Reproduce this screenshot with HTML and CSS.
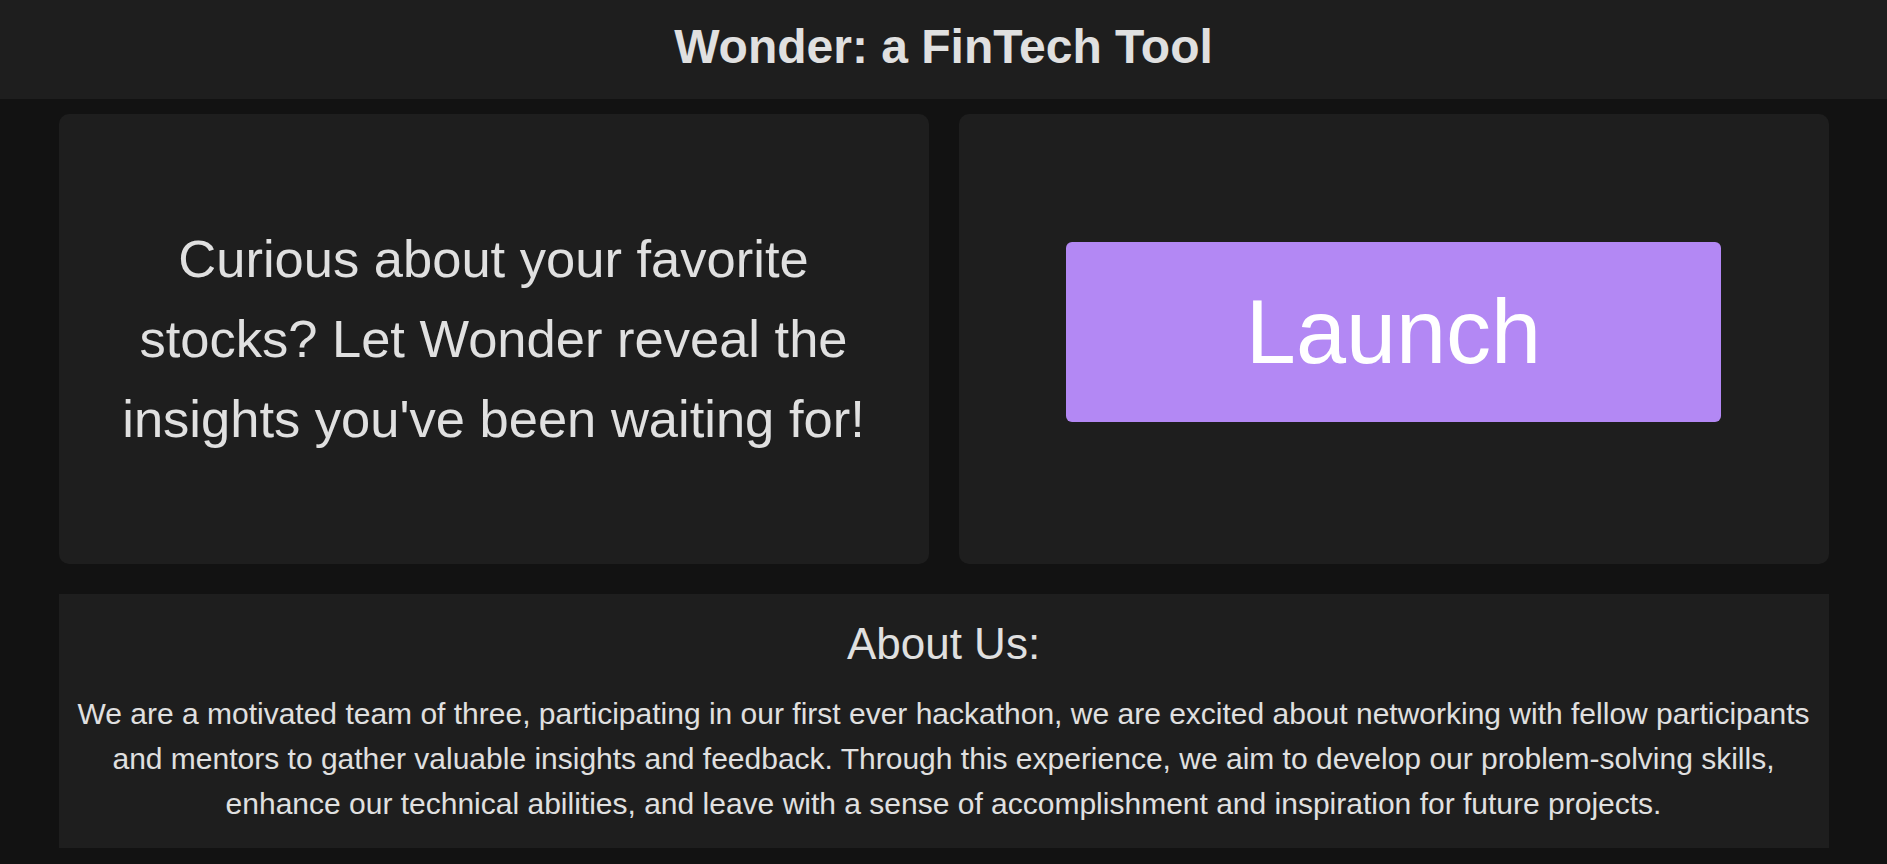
FILE: index.html
```html
<!DOCTYPE html>
<html lang="en">
<head>
<meta charset="utf-8">
<title>Wonder: a FinTech Tool</title>
<link rel="stylesheet" href="styles.css">
</head>
<body>
<header class="topbar">
  <h1 class="title">Wonder: a FinTech Tool</h1>
</header>
<main class="main">
  <section class="cards">
    <div class="card card-text">
      <p class="pitch">Curious about your favorite stocks? Let Wonder reveal the insights you've been waiting for!</p>
    </div>
    <div class="card card-launch">
      <button class="launch" type="button">Launch</button>
    </div>
  </section>
  <section class="about">
    <h2 class="about-title">About Us:</h2>
    <p class="about-text">We are a motivated team of three, participating in our first ever hackathon, we are excited about networking with fellow participants and mentors to gather valuable insights and feedback. Through this experience, we aim to develop our problem-solving skills, enhance our technical abilities, and leave with a sense of accomplishment and inspiration for future projects.</p>
  </section>
</main>
</body>
</html>
```

FILE: styles.css
```css
* { box-sizing: border-box; }

html, body {
  margin: 0;
  padding: 0;
  background: #121212;
  color: #e0e0e0;
  font-family: "Liberation Sans", Arial, sans-serif;
}

.topbar {
  background: #1e1e1e;
  height: 99px;
  padding-top: 19px;
  text-align: center;
}

.title {
  margin: 0;
  font-size: 48px;
  font-weight: bold;
  line-height: normal;
  color: #e0e0e0;
}

.main {
  width: 1770px;
  margin: 0 auto;
  padding: 15px 0;
  display: flex;
  flex-direction: column;
  gap: 30px;
}

.cards {
  display: grid;
  grid-template-columns: 1fr 1fr;
  gap: 30px;
  height: 450px;
}

.card {
  background: #1e1e1e;
  border-radius: 10px;
  display: flex;
  align-items: center;
  justify-content: center;
}

.card-text {
  padding: 0 50px;
}

.pitch {
  margin: 0;
  font-size: 52.5px;
  line-height: 80px;
  text-align: center;
  color: #e0e0e0;
}

.launch {
  width: 655px;
  height: 180px;
  margin-bottom: 14px;
  border: none;
  border-radius: 6px;
  background: #b388f4;
  color: #ffffff;
  font-family: "Liberation Sans", Arial, sans-serif;
  font-size: 90px;
  cursor: pointer;
  padding: 0;
}

.about {
  background: #1e1e1e;
  padding: 25px 15px 22px;
  text-align: center;
}

.about-title {
  margin: 0 0 22px;
  font-size: 44px;
  font-weight: normal;
  line-height: normal;
  color: #e0e0e0;
}

.about-text {
  margin: 0;
  font-size: 30px;
  line-height: 45px;
  color: #e0e0e0;
}
```
